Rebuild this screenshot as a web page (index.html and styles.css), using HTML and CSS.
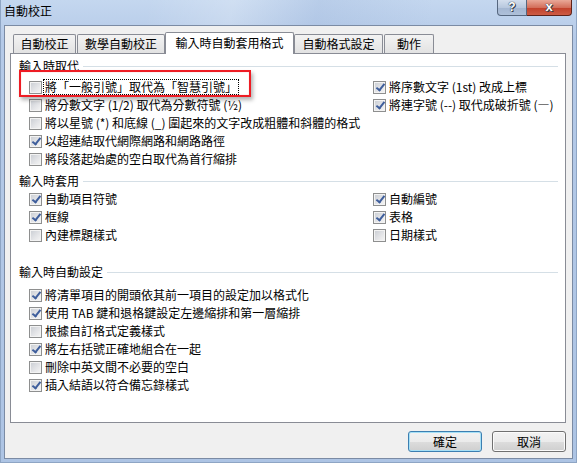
FILE: index.html
```html
<!DOCTYPE html>
<html lang="zh-Hant">
<head>
    <meta charset="UTF-8">
    <title>自動校正</title>
    <link rel="stylesheet" href="styles.css">
</head>
<body>
    <div class="window">
        <div class="titlebar">
            <span class="title">自動校正</span>
            <div class="caption-buttons">
                <div class="cap-btn help">?</div>
                <div class="cap-btn close">x</div>
            </div>
        </div>
        <div class="client">
            <div class="tabs">
                <div class="tab t1">自動校正</div>
                <div class="tab t2">數學自動校正</div>
                <div class="tab t3 selected">輸入時自動套用格式</div>
                <div class="tab t4">自動格式設定</div>
                <div class="tab t5">動作</div>
            </div>
            <div class="panel">
                <!-- 輸入時取代 -->
                <div class="group-title">輸入時取代</div>
                <div class="options s1">
                    <label class="opt left"><span class="cb"></span><span class="text focus">將「一般引號」取代為「智慧引號」</span></label>
                    <label class="opt right"><span class="cb on"></span><span class="text">將序數文字 (1st) 改成上標</span></label>
                    <label class="opt left"><span class="cb"></span><span class="text">將分數文字 (1/2) 取代為分數符號 (½)</span></label>
                    <label class="opt right"><span class="cb on"></span><span class="text">將連字號 (--) 取代成破折號 (—)</span></label>
                    <label class="opt left"><span class="cb"></span><span class="text">將以星號 (*) 和底線 (_) 圍起來的文字改成粗體和斜體的格式</span></label>
                    <label class="opt left"><span class="cb on"></span><span class="text">以超連結取代網際網路和網路路徑</span></label>
                    <label class="opt left"><span class="cb"></span><span class="text">將段落起始處的空白取代為首行縮排</span></label>
                </div>

                <!-- 輸入時套用 -->
                <div class="group-title g2">輸入時套用</div>
                <div class="options s2">
                    <label class="opt left"><span class="cb on"></span><span class="text">自動項目符號</span></label>
                    <label class="opt right"><span class="cb on"></span><span class="text">自動編號</span></label>
                    <label class="opt left"><span class="cb on"></span><span class="text">框線</span></label>
                    <label class="opt right"><span class="cb on"></span><span class="text">表格</span></label>
                    <label class="opt left"><span class="cb"></span><span class="text">內建標題樣式</span></label>
                    <label class="opt right"><span class="cb"></span><span class="text">日期樣式</span></label>
                </div>

                <!-- 輸入時自動設定 -->
                <div class="group-title g3">輸入時自動設定</div>
                <div class="options s3">
                    <label class="opt left"><span class="cb on"></span><span class="text">將清單項目的開頭依其前一項目的設定加以格式化</span></label>
                    <label class="opt left"><span class="cb on"></span><span class="text">使用 TAB 鍵和退格鍵設定左邊縮排和第一層縮排</span></label>
                    <label class="opt left"><span class="cb"></span><span class="text">根據自訂格式定義樣式</span></label>
                    <label class="opt left"><span class="cb on"></span><span class="text">將左右括號正確地組合在一起</span></label>
                    <label class="opt left"><span class="cb"></span><span class="text">刪除中英文間不必要的空白</span></label>
                    <label class="opt left"><span class="cb on"></span><span class="text">插入結語以符合備忘錄樣式</span></label>
                </div>

                <div class="highlight"></div>
            </div>
            <div class="footer">
                <button class="btn default">確定</button>
                <button class="btn">取消</button>
            </div>
        </div>
    </div>
</body>
</html>
```

FILE: styles.css
```css
body {
    margin: 0;
    font-family: "Noto Sans CJK TC", "Noto Sans CJK SC", sans-serif;
    font-size: 12px;
    color: #000;
    background: #fff;
}
.window {
    width: 577px;
    height: 463px;
    box-sizing: border-box;
    padding: 0 4px 4px 4px;
    display: flex;
    flex-direction: column;
    background: linear-gradient(to bottom, #c4d7ef 0%, #b5cae8 40px, #adc4e4 100%);
    box-shadow: inset 1px 0 0 #8ea5c4, inset -1px 0 0 #8ea5c4, inset 0 -1px 0 #8ea5c4;
}
/* 標題列 */
.titlebar {
    height: 25px;
    flex-shrink: 0;
    display: flex;
    justify-content: space-between;
    align-items: flex-start;
    background: linear-gradient(100deg, rgba(255, 255, 255, 0) 25%, rgba(255, 255, 255, 0.2) 40%, rgba(150, 175, 215, 0.25) 55%, rgba(255, 255, 255, 0) 75%);
}
.title {
    line-height: 14px;
    padding-top: 4px;
}
.caption-buttons {
    display: flex;
    margin-right: 1px;
}
.cap-btn {
    height: 16px;
    box-sizing: border-box;
    border: 1px solid #56677f;
    border-top: none;
    color: #fff;
    font-family: "Liberation Sans", sans-serif;
    font-weight: bold;
    text-align: center;
    line-height: 14px;
    text-shadow: 0 0 1px #2b3442, 0 0 1px #2b3442, 1px 1px 0 #3a4252;
}
.help {
    width: 30px;
    font-size: 12px;
    border-radius: 0 0 0 4px;
    background: linear-gradient(#d3deed, #b8c8de 50%, #a3b6d1 51%, #aec0d9);
}
.close {
    width: 45px;
    font-size: 13px;
    border-left: none;
    border-color: #5e2219;
    border-radius: 0 0 4px 0;
    background: linear-gradient(#e9a898, #d36f5b 50%, #c13f29 51%, #cd5c45);
}
/* 視窗內容 */
.client {
    flex: 1;
    background: #f0f0f0;
    border: 1px solid #7b8ba4;
    padding: 6px 6px 0 5px;
    display: flex;
    flex-direction: column;
}
.tabs {
    display: flex;
    align-items: flex-start;
    gap: 1px;
    height: 22px;
    padding-left: 3px;
    position: relative;
    z-index: 1;
}
.tab {
    height: 19px;
    margin-top: 2px;
    box-sizing: border-box;
    border: 1px solid #898c95;
    border-bottom: none;
    border-radius: 2px 2px 0 0;
    background: linear-gradient(#f3f3f3, #e2e2e2);
    text-align: center;
    line-height: 18px;
    white-space: nowrap;
}
.t1 { width: 63px; }
.t2 { width: 88px; }
.t3 { width: 129px; }
.t4 { width: 89px; }
.t5 { width: 50px; }
.tab.selected {
    height: 22px;
    margin: 0 -1px;
    background: #fff;
    line-height: 20px;
}
.panel {
    height: 370px;
    box-sizing: border-box;
    margin-top: -1px;
    border: 1px solid #898c95;
    background: #fff;
    padding: 4px 7px 0 8px;
    position: relative;
}
.group-title {
    display: flex;
    align-items: center;
    line-height: 15px;
    white-space: nowrap;
}
.group-title::after {
    content: "";
    flex: 1;
    height: 1px;
    margin: 2px 0 0 4px;
    background: #d5dfe6;
}
.g2 { margin-top: 5px; }
.g3 { margin-top: 20px; }
.options {
    margin-left: 10px;
    display: grid;
    grid-template-columns: 344px auto;
    grid-auto-rows: 18px;
}
.s1 { margin-top: 5px; }
.s2 { margin-top: 2px; }
.s3 { margin-top: 7px; }
.opt {
    display: flex;
    align-items: center;
    gap: 1px;
    white-space: nowrap;
}
.opt.left { grid-column: 1; }
.opt.right { grid-column: 2; }
.text {
    line-height: 14px;
    padding: 0 1px;
    border: 1px solid transparent;
}
.text.focus {
    border: 1px dotted #000;
}
/* 核取方塊 */
.cb {
    width: 13px;
    height: 13px;
    flex-shrink: 0;
    box-sizing: border-box;
    border: 1px solid #8e8f8f;
    background: linear-gradient(135deg, #c8ccd2 0%, #e3e4e7 55%, #f6f6f6 100%);
    box-shadow: inset 0 0 0 1px #f3f3f3;
    position: relative;
}
.cb.on::after {
    content: "";
    position: absolute;
    left: 4px;
    top: 0;
    width: 3px;
    height: 7px;
    border: solid #3e5e9c;
    border-width: 0 2px 2px 0;
    transform: rotate(38deg);
}
/* 紅框標示 */
.highlight {
    position: absolute;
    left: 8px;
    top: 16px;
    width: 232px;
    height: 27px;
    box-sizing: border-box;
    border: 2px solid #ee1c24;
    box-shadow: 2px 3px 4px rgba(0, 0, 0, 0.3), inset 0 0 1px rgba(238, 28, 36, 0.5);
}
/* 按鈕 */
.footer {
    display: flex;
    justify-content: flex-end;
    gap: 10px;
    padding-top: 8px;
}
.btn {
    width: 74px;
    height: 21px;
    padding: 0;
    font-family: inherit;
    font-size: 12px;
    color: #000;
    border: 1px solid #707070;
    border-radius: 3px;
    background: linear-gradient(#f2f2f2 0%, #ebebeb 50%, #dddddd 51%, #cfcfcf 100%);
    box-shadow: inset 0 0 0 1px #fbfbfb;
}
.btn.default {
    border-color: #3c7fb1;
    box-shadow: inset 0 0 0 1px #a6e0f6;
}
```
